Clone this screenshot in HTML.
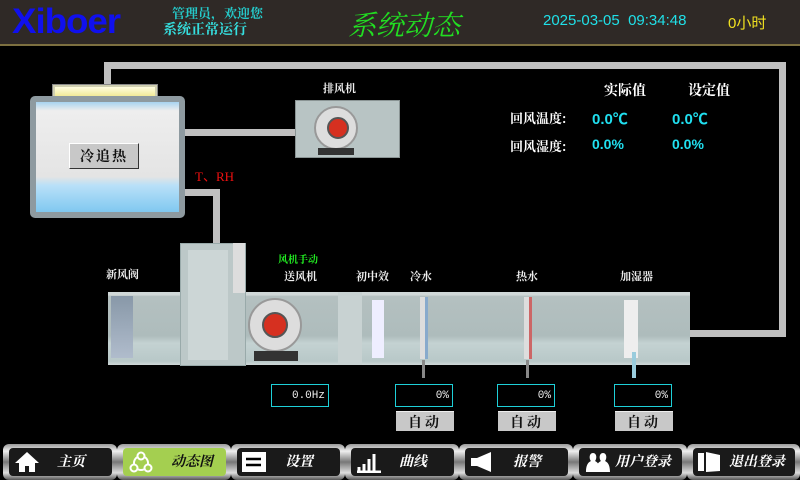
<!DOCTYPE html>
<html><head><meta charset="utf-8"><style>
*{margin:0;padding:0;box-sizing:border-box}
body{width:800px;height:480px;background:#000;position:relative;overflow:hidden;font-family:"Liberation Sans","Noto Sans CJK SC",sans-serif;color:#fff}
.a{position:absolute}
.hd{left:0;top:0;width:800px;height:46px;background:#2f2926;border-bottom:2px solid #7d7040}
.p{position:absolute;background:#c0c0c0}
.cj{font-family:"Noto Serif CJK SC","Noto Sans CJK SC",serif;font-weight:bold}
.lbl{font-size:11px;color:#eee;font-family:"Noto Serif CJK SC",serif;font-weight:bold}
.box{position:absolute;border:1px solid #1ed0d8;height:23px;width:58px;color:#eee;font-size:11px;text-align:right;padding:5px 3px 0 0;font-family:"Liberation Mono",monospace}
.btn{position:absolute;width:58px;height:20px;background:#c8c8c8;color:#111;font-size:14px;text-align:center;line-height:20px;letter-spacing:3px;border-top:1px solid #eee}
.nb{position:absolute;top:444px;width:114px;height:36px;background:linear-gradient(#999,#eee 20%,#777 50%,#ddd 80%,#555);border-radius:6px}
.nb div{position:absolute;left:6px;top:4px;right:5px;bottom:4px;background:#1a1a1a;border-radius:4px;color:#fff;font-size:14px;font-style:italic;font-family:"Noto Serif CJK SC",serif;font-weight:bold;line-height:27px;padding-left:48px}
.nb.on div{background:#a4cf50;color:#111}
.ic{position:absolute;left:4px;top:3px;width:28px;height:22px}
.fan{position:absolute;border-radius:50%;background:#ddd;border:2px solid #999}
</style></head><body>
<div class="a hd"></div>
<div class="a" style="left:12px;top:2px;font-size:35px;font-weight:bold;color:#1010ee;letter-spacing:-1px;font-family:'Liberation Sans',sans-serif;transform:scaleX(1.05);transform-origin:left">Xiboer</div>
<div class="a cj" style="left:172px;top:3px;font-size:13px;color:#25c8c8">管理员，欢迎您</div>
<div class="a cj" style="left:163px;top:19px;font-size:14px;color:#35e0e0">系统正常运行</div>
<div class="a" style="left:348px;top:4px;font-size:28px;color:#22dd22;font-style:italic;font-family:'Noto Serif CJK SC',serif">系统动态</div>
<div class="a" style="left:543px;top:12px;font-size:15px;color:#20e0e8;font-family:'Liberation Sans',sans-serif">2025-03-05&nbsp; 09:34:48</div>
<div class="a" style="left:728px;top:12px;font-size:15px;color:#f0e020">0小时</div>

<div class="p" style="left:104px;top:62px;width:682px;height:7px"></div>
<div class="p" style="left:779px;top:62px;width:7px;height:275px"></div>
<div class="p" style="left:676px;top:330px;width:110px;height:7px"></div>
<div class="p" style="left:104px;top:62px;width:7px;height:24px"></div>
<div class="p" style="left:183px;top:129px;width:114px;height:7px"></div>
<div class="p" style="left:183px;top:189px;width:37px;height:7px"></div>
<div class="p" style="left:213px;top:189px;width:7px;height:56px"></div>

<div class="a" style="left:52px;top:84px;width:106px;height:16px;background:#cfcfb0;border:1px solid #888"><div style="margin:2px;height:10px;background:linear-gradient(#fffde0,#f0e890)"></div></div>
<div class="a" style="left:30px;top:96px;width:155px;height:122px;background:#8e9aa0;border-radius:5px;padding:6px"><div style="width:100%;height:100%;background:linear-gradient(#a8d4f0 0,#eeeeee 8%,#e4e4e4 68%,#b8e0f8 76%,#80c8f0 100%)"></div></div>
<div class="a cj" style="left:69px;top:143px;width:70px;height:26px;background:#c8c8c8;border:1px solid #fff;border-right-color:#333;border-bottom-color:#333;color:#111;font-size:14px;text-align:center;line-height:24px;letter-spacing:2px">冷追热</div>
<div class="a" style="left:195px;top:166px;color:#f01010;font-size:13px;font-family:'Liberation Serif',serif">T、RH</div>

<div class="a lbl" style="left:323px;top:80px">排风机</div>
<div class="a" style="left:295px;top:100px;width:105px;height:58px;background:#b8c4c4;border:1px solid #8a9494"></div>
<div class="fan" style="left:314px;top:106px;width:44px;height:44px"></div>
<div class="a" style="left:327px;top:117px;width:22px;height:22px;border-radius:50%;background:#d63020;border:2px solid #555"></div>
<div class="a" style="left:318px;top:148px;width:36px;height:7px;background:#333"></div>

<div class="a cj" style="left:604px;top:80px;font-size:14px">实际值</div>
<div class="a cj" style="left:688px;top:80px;font-size:14px">设定值</div>
<div class="a cj" style="left:510px;top:108px;font-size:13px">回风温度:</div>
<div class="a cj" style="left:510px;top:136px;font-size:13px">回风湿度:</div>
<div class="a" style="left:592px;top:108px;font-size:15px;color:#20e0f0;font-weight:bold">0.0℃</div>
<div class="a" style="left:672px;top:108px;font-size:15px;color:#20e0f0;font-weight:bold">0.0℃</div>
<div class="a" style="left:592px;top:136px;font-size:14px;color:#20e0f0;font-weight:bold">0.0%</div>
<div class="a" style="left:672px;top:136px;font-size:14px;color:#20e0f0;font-weight:bold">0.0%</div>

<div class="a" style="left:108px;top:292px;width:582px;height:73px;background:linear-gradient(#d0d8d8 0,#d0d8d8 4%,#b4c0c0 6%,#aebcbc 60%,#c4d2d2 70%,#b8c8c8 95%,#d0d8d8 100%)"></div>
<div class="a" style="left:111px;top:296px;width:22px;height:62px;background:linear-gradient(#8898a8,#b0bccc)"></div>
<div class="a" style="left:180px;top:243px;width:66px;height:123px;background:#bcc8c8;border:1px solid #9aa"></div>
<div class="a" style="left:188px;top:250px;width:40px;height:110px;background:#ccd6d6"></div>
<div class="a" style="left:233px;top:243px;width:12px;height:50px;background:#ddd"></div>
<div class="fan" style="left:248px;top:298px;width:54px;height:54px"></div>
<div class="a" style="left:262px;top:312px;width:26px;height:26px;border-radius:50%;background:#d63020;border:2px solid #555"></div>
<div class="a" style="left:254px;top:351px;width:44px;height:10px;background:#333"></div>
<div class="a" style="left:338px;top:292px;width:24px;height:73px;background:#c8d2d2"></div>
<div class="a" style="left:372px;top:300px;width:12px;height:58px;background:#eef"></div>
<div class="a" style="left:420px;top:297px;width:8px;height:62px;background:#ddd;border-right:3px solid #8ac"></div>
<div class="a" style="left:524px;top:297px;width:8px;height:62px;background:#ddd;border-right:3px solid #c66"></div>
<div class="a" style="left:624px;top:300px;width:14px;height:58px;background:#eee"></div>
<div class="a" style="left:422px;top:360px;width:3px;height:18px;background:#888"></div>
<div class="a" style="left:526px;top:360px;width:3px;height:18px;background:#888"></div>
<div class="a" style="left:632px;top:352px;width:4px;height:26px;background:#9cd"></div>

<div class="a" style="left:278px;top:251px;font-size:10px;color:#22ee22;font-weight:bold;font-family:'Noto Serif CJK SC',serif">风机手动</div>
<div class="a lbl" style="left:106px;top:266px">新风阀</div>
<div class="a lbl" style="left:284px;top:268px">送风机</div>
<div class="a lbl" style="left:356px;top:268px">初中效</div>
<div class="a lbl" style="left:410px;top:268px">冷水</div>
<div class="a lbl" style="left:516px;top:268px">热水</div>
<div class="a lbl" style="left:620px;top:268px">加湿器</div>

<div class="box" style="left:271px;top:384px">0.0Hz</div>
<div class="box" style="left:395px;top:384px">0%</div>
<div class="box" style="left:497px;top:384px">0%</div>
<div class="box" style="left:614px;top:384px">0%</div>
<div class="btn cj" style="left:396px;top:411px">自动</div>
<div class="btn cj" style="left:498px;top:411px">自动</div>
<div class="btn cj" style="left:615px;top:411px">自动</div>

<div class="nb" style="left:3px"><div><svg class="ic" viewBox="0 0 28 22"><path d="M14 1L2 12h4v9h6v-6h4v6h6v-9h4z" fill="#fff"/></svg>主页</div></div>
<div class="nb on" style="left:117px"><div><svg class="ic" viewBox="0 0 28 22"><circle cx="14" cy="12" r="7" fill="none" stroke="#fff" stroke-width="2"/><circle cx="14" cy="5" r="3.5" fill="#a4cf50" stroke="#fff" stroke-width="2"/><circle cx="7" cy="17" r="3.5" fill="#a4cf50" stroke="#fff" stroke-width="2"/><circle cx="21" cy="17" r="3.5" fill="#a4cf50" stroke="#fff" stroke-width="2"/></svg>动态图</div></div>
<div class="nb" style="left:231px"><div><svg class="ic" viewBox="0 0 28 22"><rect x="1" y="1" width="24" height="20" fill="#fff"/><path d="M5 8h15M5 14h15" stroke="#000" stroke-width="2.5"/></svg>设置</div></div>
<div class="nb" style="left:345px"><div><svg class="ic" viewBox="0 0 28 22"><path d="M2 21h24M4 20v-4M9 20v-7M14 20V8M19 20V3" stroke="#fff" stroke-width="3"/></svg>曲线</div></div>
<div class="nb" style="left:459px"><div><svg class="ic" viewBox="0 0 28 22"><path d="M2 7h6l14-6v20L8 15H2z" fill="#fff"/></svg>报警</div></div>
<div class="nb" style="left:573px"><div style="padding-left:36px"><svg class="ic" viewBox="0 0 28 22"><path d="M3 21c0-8 3-10 5-11-2-2-2-8 2-8s4 6 2 8c2 1 5 3 5 11zM13 21c0-8 3-10 5-11-2-2-2-8 2-8s4 6 2 8c2 1 5 3 5 11z" fill="#fff"/></svg>用户登录</div></div>
<div class="nb" style="left:687px;width:113px"><div style="padding-left:36px"><svg class="ic" viewBox="0 0 28 22"><rect x="1" y="2" width="6" height="18" fill="#fff"/><path d="M9 1l14 3v16L9 21z" fill="#fff"/></svg>退出登录</div></div>
</body></html>
